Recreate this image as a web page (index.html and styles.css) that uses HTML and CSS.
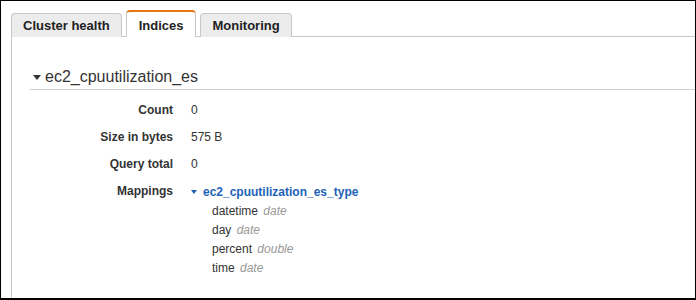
FILE: index.html
```html
<!DOCTYPE html>
<html lang="en">
<head>
  <meta charset="UTF-8">
  <title>Indices</title>
  <link rel="stylesheet" href="styles.css">
</head>
<body>
  <div class="frame">
    <div class="tabs">
      <div class="tab">Cluster health</div>
      <div class="tab active">Indices</div>
      <div class="tab">Monitoring</div>
    </div>
    <div class="panel">
      <h2 class="index-title"><span class="caret"></span>ec2_cpuutilization_es</h2>
      <div class="details">
        <div class="label">Count</div>
        <div class="value">0</div>
        <div class="label">Size in bytes</div>
        <div class="value">575 B</div>
        <div class="label">Query total</div>
        <div class="value">0</div>
        <div class="label">Mappings</div>
        <div class="value mappings">
          <a class="type-link" href="#"><span class="caret blue"></span>ec2_cpuutilization_es_type</a>
          <ul class="fields">
            <li>datetime <em>date</em></li>
            <li>day <em>date</em></li>
            <li>percent <em>double</em></li>
            <li>time <em>date</em></li>
          </ul>
        </div>
      </div>
    </div>
  </div>
</body>
</html>
```

FILE: styles.css
```css
body {
  margin: 0;
  font-family: "Liberation Sans", Arial, sans-serif;
  color: #333;
  background: #fff;
}
.frame {
  width: 696px;
  height: 300px;
  box-sizing: border-box;
  border: 1px solid #000;
  border-bottom-width: 2px;
  overflow: hidden;
}
.tabs {
  display: flex;
  align-items: flex-end;
  gap: 4px;
  padding: 9px 0 0 10px;
  margin-bottom: -1px;
  position: relative;
  z-index: 1;
}
.tab {
  height: 23px;
  line-height: 24px;
  padding: 0 11px;
  font-size: 13px;
  font-weight: bold;
  color: #222;
  background: #ececec;
  border: 1px solid #c8c8c8;
  border-bottom: none;
  border-radius: 4px 4px 0 0;
}
.tab.active {
  height: 25px;
  line-height: 28px;
  background: #fff;
  border-top: 2px solid #e47911;
  padding: 0 12px;
}
.panel {
  margin-left: 10px;
  border-top: 1px solid #c8c8c8;
  border-left: 1px solid #c8c8c8;
  height: 300px;
  padding-left: 18px;
}
.index-title {
  margin: 0;
  padding: 28px 0 0;
  height: 24px;
  font-size: 16px;
  font-weight: normal;
  color: #333;
  border-bottom: 1px solid #cfcfcf;
  display: flex;
  align-items: center;
}
.caret {
  display: inline-block;
  width: 0;
  height: 0;
  border-left: 4px solid transparent;
  border-right: 4px solid transparent;
  border-top: 5px solid #333;
  margin: 0 4px 0 3px;
}
.caret.blue {
  border-left-width: 3px;
  border-right-width: 3px;
  border-top: 4px solid #1e62b8;
  margin: 0 6px 1px 0;
  vertical-align: middle;
}
.details {
  display: grid;
  grid-template-columns: 143px 1fr;
  column-gap: 18px;
  padding-top: 7px;
  font-size: 12px;
  line-height: 27px;
}
.label {
  text-align: right;
  font-weight: bold;
}
.mappings {
  line-height: 19px;
  padding-top: 5px;
}
.type-link {
  color: #1e62b8;
  font-weight: bold;
  text-decoration: none;
}
.fields {
  list-style: none;
  margin: 0;
  padding: 0 0 0 21px;
}
.fields em {
  color: #999;
  margin-left: 2px;
}
```
